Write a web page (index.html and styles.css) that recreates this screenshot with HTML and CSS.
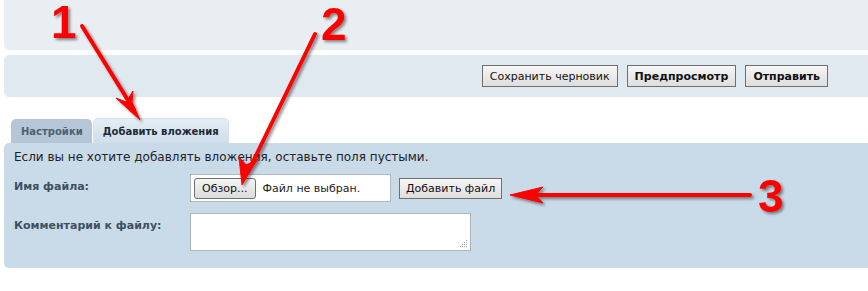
FILE: index.html
```html
<!DOCTYPE html>
<html lang="ru">
<head>
    <meta charset="UTF-8">
    <title>Добавить вложения</title>
    <link rel="stylesheet" href="styles.css">
</head>
<body>
    <div class="page">
        <div class="top-panel"></div>

        <div class="toolbar">
            <button class="btn">Сохранить черновик</button>
            <button class="btn btn-bold">Предпросмотр</button>
            <button class="btn btn-bold">Отправить</button>
        </div>

        <div class="tabs">
            <div class="tab">Настройки</div>
            <div class="tab tab-active">Добавить вложения</div>
        </div>

        <div class="panel">
            <p class="hint">Если вы не хотите добавлять вложения, оставьте поля пустыми.</p>

            <div class="row">
                <label class="label">Имя файла:</label>
                <div class="file-box">
                    <span class="browse">Обзор...</span>
                    <span class="file-name">Файл не выбран.</span>
                </div>
                <button class="btn btn-add">Добавить файл</button>
            </div>

            <div class="row">
                <label class="label">Комментарий к файлу:</label>
                <div class="comment">
                    <svg class="grip" width="7" height="7" viewBox="0 0 7 7">
                        <rect x="6" y="0" width="1" height="1" fill="#9aa4ad"/>
                        <rect x="4" y="2" width="1" height="1" fill="#9aa4ad"/>
                        <rect x="6" y="2" width="1" height="1" fill="#9aa4ad"/>
                        <rect x="2" y="4" width="1" height="1" fill="#9aa4ad"/>
                        <rect x="4" y="4" width="1" height="1" fill="#9aa4ad"/>
                        <rect x="6" y="4" width="1" height="1" fill="#9aa4ad"/>
                        <rect x="0" y="6" width="1" height="1" fill="#9aa4ad"/>
                        <rect x="2" y="6" width="1" height="1" fill="#9aa4ad"/>
                        <rect x="4" y="6" width="1" height="1" fill="#9aa4ad"/>
                        <rect x="6" y="6" width="1" height="1" fill="#9aa4ad"/>
                    </svg>
                </div>
            </div>
        </div>

        <!-- red pointers drawn over the form -->
        <svg class="marks" width="868" height="291" viewBox="0 0 868 291">
            <defs>
                <filter id="shade" x="-20%" y="-20%" width="140%" height="140%">
                    <feDropShadow dx="2" dy="2" stdDeviation="1.5" flood-color="#000" flood-opacity="0.45"/>
                </filter>
            </defs>
            <g filter="url(#shade)" fill="#ff0000" stroke="#ff0000">
                <line x1="82" y1="26" x2="134" y2="110" stroke-width="4" stroke-linecap="round"/>
                <polygon points="140,120 116,98 126,102 133,91 132,102" stroke-width="1" stroke-linejoin="round"/>

                <line x1="315" y1="34" x2="248" y2="172" stroke-width="4" stroke-linecap="round"/>
                <polygon points="242,185 239,157 246,165 258,159 252,168" stroke-width="1" stroke-linejoin="round"/>

                <line x1="750" y1="195" x2="526" y2="195" stroke-width="4" stroke-linecap="round"/>
                <polygon points="510,195 543,187 535,195 543,203" stroke-width="1" stroke-linejoin="round"/>

                <text x="51" y="38" class="num">1</text>
                <text x="321" y="40" class="num">2</text>
                <text x="758" y="212" class="num">3</text>
            </g>
        </svg>
    </div>
</body>
</html>
```

FILE: styles.css
```css
* {
    margin: 0;
    padding: 0;
    box-sizing: border-box;
}

body {
    font-family: 'DejaVu Sans', Verdana, sans-serif;
    font-size: 11px;
    color: #222;
    background: #fff;
}

.page {
    position: relative;
    width: 868px;
    height: 291px;
    overflow: hidden;
}

.top-panel {
    margin-left: 4px;
    height: 50px;
    background: #e8eef2;
    border-radius: 0 0 0 5px;
}

.toolbar {
    margin: 5px 0 0 4px;
    height: 42px;
    background: #e0e9f0;
    border-radius: 5px 0 0 5px;
    display: flex;
    justify-content: flex-end;
    align-items: center;
    gap: 9px;
    padding-right: 40px;
}

.btn {
    font-family: 'DejaVu Sans', Verdana, sans-serif;
    font-size: 11px;
    height: 22px;
    padding: 0 7px;
    color: #111;
    border: 1px solid #6f6f6f;
    background: linear-gradient(#f6f6f6, #dedede);
}

.btn-bold {
    font-weight: bold;
}

.tabs {
    display: flex;
    gap: 1px;
    margin: 21px 0 0 11px;
    height: 25px;
    align-items: flex-end;
}

.tab {
    height: 24px;
    padding: 0 9px 0 10px;
    display: flex;
    align-items: center;
    font-size: 10px;
    font-weight: bold;
    color: #4d5f72;
    background: #b5c7d6;
    border-radius: 5px 5px 0 0;
}

.tab-active {
    height: 25px;
    padding: 0 9px;
    color: #1e2a36;
    background: linear-gradient(#e4edf5, #cfdeeb);
    border: 1px solid #d6e2ec;
    border-bottom: none;
}

.panel {
    margin-left: 4px;
    height: 125px;
    background: #c9dae9;
    border-radius: 5px 0 0 5px;
    padding: 7px 10px 0 10px;
}

.hint {
    font-size: 12px;
    line-height: 15px;
    color: #222;
    margin-bottom: 9px;
}

.row {
    display: flex;
    align-items: flex-start;
    margin-bottom: 11px;
}

.label {
    width: 176px;
    font-weight: bold;
    color: #3e4f60;
    padding-top: 6px;
}

.file-box {
    width: 201px;
    height: 28px;
    background: #fff;
    border: 1px solid #b0b8c0;
    display: flex;
    align-items: center;
    padding-left: 3px;
    gap: 7px;
}

.browse {
    height: 21px;
    padding: 0 7px;
    display: flex;
    align-items: center;
    border: 1px solid #707070;
    border-radius: 3px;
    background: linear-gradient(#f4f4f4, #dcdcdc);
    color: #111;
}

.file-name {
    color: #222;
}

.btn-add {
    margin: 4px 0 0 8px;
    height: 21px;
    padding: 0 6px;
}

.comment {
    position: relative;
    width: 281px;
    height: 38px;
    background: #fff;
    border: 1px solid #adb5bd;
}

.grip {
    position: absolute;
    right: 3px;
    bottom: 3px;
}

.marks {
    position: absolute;
    left: 0;
    top: 0;
    pointer-events: none;
}

.num {
    font-family: 'Liberation Sans', Arial, sans-serif;
    font-size: 46px;
    font-weight: bold;
    stroke: none;
}
```
